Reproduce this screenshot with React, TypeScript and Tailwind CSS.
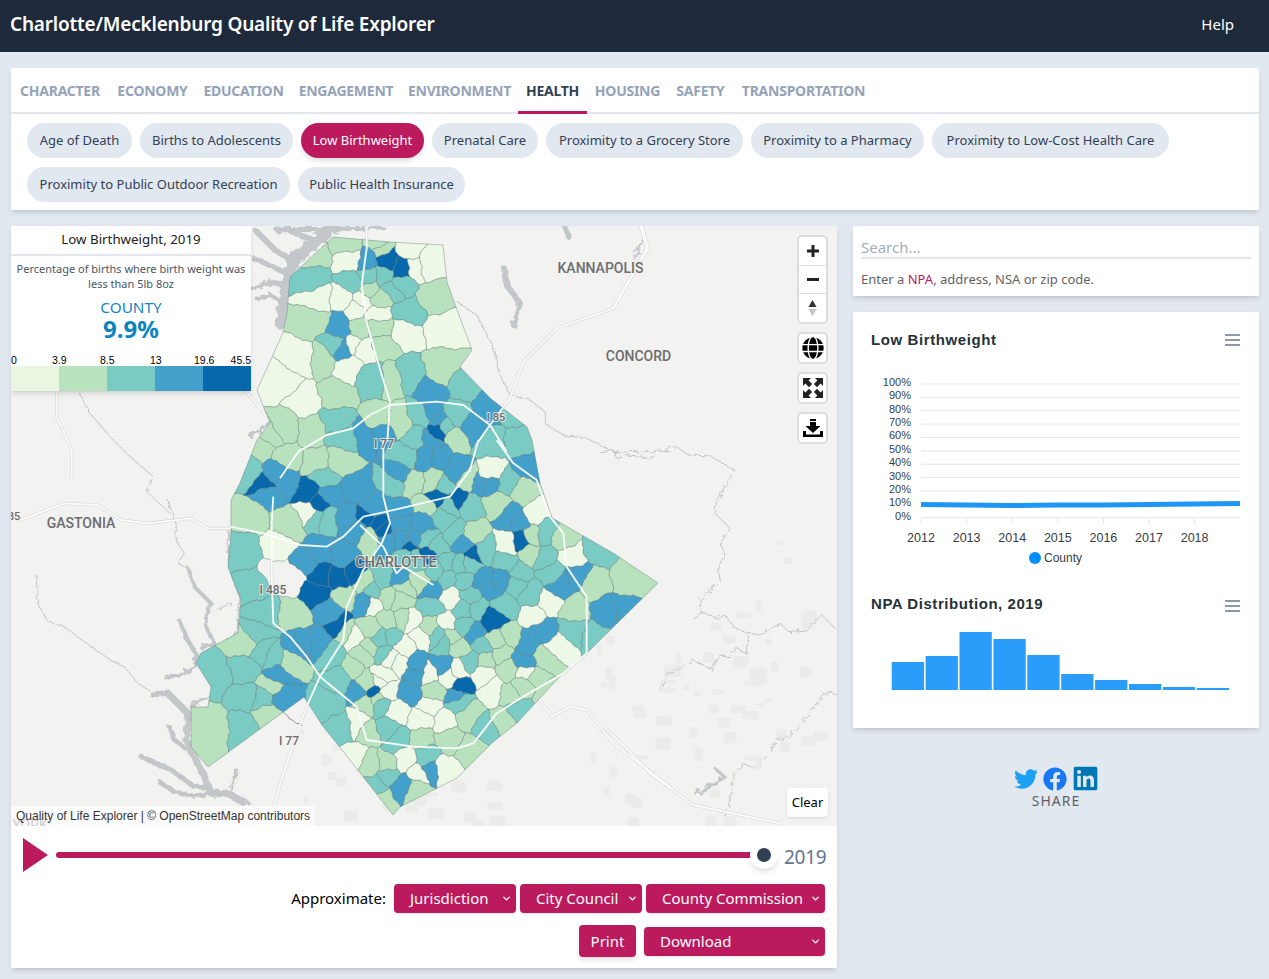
import React from 'react';
import { FaFacebook, FaGlobe, FaLinkedin, FaTwitter } from 'react-icons/fa';
import { LuChevronDown } from 'react-icons/lu';

type Pt = [number, number];

const metrics = [
  { name: 'CHARACTER', width: 'w-[98px]' },
  { name: 'ECONOMY', width: 'w-[87px]' },
  { name: 'EDUCATION', width: 'w-[95px]' },
  { name: 'ENGAGEMENT', width: 'w-[110px]' },
  { name: 'ENVIRONMENT', width: 'w-[117px]' },
  { name: 'HEALTH', width: 'w-[69px]' },
  { name: 'HOUSING', width: 'w-[81px]' },
  { name: 'SAFETY', width: 'w-[65px]' },
  { name: 'TRANSPORTATION', width: 'w-[141px]' },
];
const healthMetrics = [
  { name: 'Age of Death', width: 'w-[105px]' },
  { name: 'Births to Adolescents', width: 'w-[153px]' },
  { name: 'Low Birthweight', width: 'w-[123px]' },
  { name: 'Prenatal Care', width: 'w-[106px]' },
  { name: 'Proximity to a Grocery Store', width: 'w-[197px]' },
  { name: 'Proximity to a Pharmacy', width: 'w-[173px]' },
  { name: 'Proximity to Low-Cost Health Care', width: 'w-[237px]' },
  { name: 'Proximity to Public Outdoor Recreation', width: 'w-[263px]' },
  { name: 'Public Health Insurance', width: 'w-[167px]' },
];

const breakColors = ['#eef8e6', '#b7e2bd', '#79cbc3', '#42a0ca', '#0868ac'];
const breakLabels = ['0', '3.9', '8.5', '13', '19.6', '45.5'];

const county: Pt[] = [
  [333, 237], [367, 240], [390, 242], [443, 245], [447, 282], [460, 318], [472, 350], [460, 367], [490, 398], [527, 427],
  [532, 440], [540, 483], [552, 518], [613, 553], [658, 583], [587, 653], [563, 673], [517, 723], [493, 742], [457, 778],
  [400, 807], [393, 815], [350, 760], [322, 725], [304, 697], [208, 767], [191, 747], [191, 707], [208, 707], [211, 687],
  [196, 663], [201, 653], [238, 633], [241, 600], [228, 567], [231, 533], [231, 500], [240, 483], [257, 440], [270, 423],
  [257, 390], [283, 333], [287, 313], [290, 277],
];

// seeds for the NPA cells: x, y, break (5 = no data). north half
const northSeeds: number[][] = [
  [250, 90, 1], [350, 55, 1], [360, 105, 0], [445, 60, 1], [415, 108, 3], [470, 105, 4], [515, 135, 4], [540, 75, 0], [590, 115, 0],
  [250, 165, 2], [365, 175, 2], [415, 155, 2], [265, 215, 0], [340, 215, 0], [490, 190, 2], [610, 220, 1], [420, 190, 1], [445, 225, 1],
  [395, 235, 0], [440, 262, 0], [250, 290, 1], [535, 265, 2], [380, 250, 0], [335, 310, 3], [310, 360, 2], [340, 375, 3], [385, 310, 1],
  [445, 310, 1], [525, 320, 0], [640, 310, 0], [370, 360, 0], [400, 370, 0], [460, 360, 1], [280, 400, 1], [350, 425, 0], [430, 460, 2],
  [490, 460, 1], [530, 450, 2], [640, 430, 1], [160, 470, 0], [210, 400, 0], [220, 530, 0], [320, 510, 1], [320, 590, 2], [700, 480, 2],
  [605, 510, 3], [780, 550, 3], [850, 560, 2], [870, 650, 2], [445, 590, 1], [510, 590, 1], [410, 630, 3], [450, 620, 3], [620, 615, 4],
  [610, 560, 3], [570, 570, 2], [670, 570, 2], [730, 615, 3], [120, 640, 1], [170, 610, 1], [240, 620, 1], [340, 640, 2], [560, 640, 2],
  [680, 640, 1], [780, 650, 2],
  // keep the dark tracts narrow
  [460, 155, 2], [510, 175, 2], [450, 70, 1], [555, 125, 0], [600, 640, 3], [645, 600, 2], [625, 585, 3],
];

// south half
const southSeeds: number[][] = [
  [43, 330, 2], [73, 440, 2], [103, 520, 2], [-37, 710, 2], [43, 690, 2], [-47, 860, 1], [43, 770, 2], [38, 860, 2], [113, 820, 1],
  [83, 580, 2], [48, 610, 1], [98, 630, 2], [133, 650, 2], [178, 660, 1], [203, 620, 3], [143, 710, 3], [153, 770, 3], [128, 735, 1],
  [103, 780, 2], [193, 520, 1], [63, 230, 1], [173, 250, 1], [143, 320, 0], [100, 20, 1], [170, 50, 1], [60, 90, 2], [110, 130, 4],
  [170, 130, 3], [280, 110, 2], [330, 60, 1], [260, 70, 1], [230, 155, 4], [270, 195, 4], [240, 215, 0], [290, 230, 2], [380, 150, 3],
  [350, 230, 3], [440, 250, 4], [410, 235, 4], [460, 270, 4], [510, 250, 3], [490, 130, 2], [510, 100, 3], [530, 50, 2], [585, 50, 3],
  [630, 50, 3], [680, 90, 3], [550, 130, 1], [620, 170, 4], [680, 180, 4], [580, 250, 3], [640, 230, 2], [720, 120, 1], [745, 130, 3],
  [785, 100, 0], [780, 130, 3], [830, 130, 2], [880, 150, 1], [900, 85, 3], [800, 190, 1], [720, 200, 2], [840, 230, 3], [920, 220, 0],
  [870, 300, 4], [835, 310, 0], [900, 350, 1], [1000, 290, 1], [950, 270, 2], [1030, 350, 0], [1100, 330, 2], [1045, 405, 3], [990, 435, 3],
  [1090, 430, 1], [1200, 420, 1], [1130, 520, 3], [1180, 510, 3], [1100, 590, 2], [1030, 510, 1], [1025, 570, 2], [960, 490, 0], [915, 530, 0],
  [940, 570, 3], [985, 620, 0], [890, 610, 3], [880, 670, 3], [885, 695, 0], [840, 590, 1], [790, 540, 4], [820, 490, 2], [780, 450, 3],
  [815, 415, 3], [760, 420, 3], [730, 345, 4], [700, 310, 3], [620, 320, 2], [680, 280, 2], [730, 280, 1], [550, 300, 3], [590, 340, 4],
  [540, 320, 4], [190, 420, 5], [140, 400, 5], [230, 370, 3], [270, 400, 4], [250, 460, 4], [330, 410, 4], [370, 400, 4], [270, 340, 3],
  [340, 350, 3], [300, 520, 3], [325, 555, 4], [220, 610, 3], [265, 610, 3], [310, 640, 2], [350, 580, 1], [365, 590, 0], [430, 500, 0],
  [400, 490, 3], [420, 560, 1], [490, 590, 2], [510, 480, 1], [540, 545, 0], [575, 590, 0], [520, 620, 0], [610, 500, 2], [650, 545, 0],
  [660, 470, 0], [460, 420, 2], [510, 420, 3], [570, 420, 1], [610, 450, 3], [640, 610, 2], [690, 620, 1], [730, 580, 3], [630, 680, 3],
  [720, 665, 2], [685, 695, 0], [660, 710, 0], [760, 705, 0], [690, 740, 4], [680, 765, 3], [790, 745, 0], [810, 640, 1], [800, 600, 1],
  [920, 710, 1], [840, 760, 1], [870, 810, 2], [710, 820, 1], [775, 870, 2], [730, 930, 1], [820, 850, 1], [480, 660, 0], [510, 670, 0],
  [460, 700, 0], [560, 675, 3], [600, 700, 0], [610, 760, 1], [540, 760, 3], [555, 700, 3], [500, 810, 0], [430, 755, 4], [385, 755, 3],
  [330, 720, 2], [370, 680, 1], [400, 650, 1], [470, 750, 0], [450, 790, 2], [300, 790, 2], [340, 860, 2], [380, 850, 0], [600, 790, 0],
  [580, 845, 0], [640, 850, 0], [690, 790, 2], [580, 890, 1], [650, 895, 1], [470, 870, 2], [420, 880, 1], [380, 950, 0], [470, 970, 1],
  [525, 960, 0], [590, 950, 2], [640, 990, 0], [500, 900, 2], [510, 1035, 3], [450, 1080, 1], [435, 1040, 2], [560, 1050, 1], [570, 1000, 0],
  [600, 990, 3], [480, 1010, 2], [420, 970, 1],
  // more tracts through the middle, mostly the two mid breaks
  [425, 620, 1], [455, 640, 2], [520, 540, 1], [470, 540, 1], [450, 600, 2], [600, 560, 1], [620, 590, 2], [665, 590, 1], [700, 560, 2],
  [700, 510, 2], [740, 500, 2], [760, 620, 2], [770, 660, 1], [830, 690, 1], [880, 740, 1], [950, 660, 1], [950, 760, 1], [650, 420, 2],
  [700, 420, 2], [720, 470, 2], [690, 370, 2], [650, 370, 2], [620, 390, 2], [860, 440, 2], [900, 460, 2], [870, 390, 2], [830, 370, 2],
  [940, 360, 2], [960, 400, 2], [560, 370, 2], [520, 440, 1], [470, 470, 1], [430, 450, 2], [400, 430, 1], [350, 470, 1],
  // keep the dark tracts narrow
  [430, 200, 3], [500, 210, 3], [470, 300, 3], [420, 290, 1], [380, 270, 3], [610, 130, 1], [590, 195, 1], [660, 200, 2], [640, 140, 2],
  [900, 280, 1], [870, 250, 3], [760, 330, 2], [720, 370, 2], [590, 300, 2], [515, 300, 3], [560, 350, 2], [530, 350, 2], [130, 100, 3],
  [120, 160, 3], [300, 170, 3], [260, 225, 2], [445, 730, 0], [445, 780, 1], [412, 730, 1], [412, 785, 1],
];

const seeds = [
  ...northSeeds.map(([x, y, c]) => [230 + x / 3, 225 + y / 3, c]),
  ...southSeeds.map(([x, y, c]) => [230 + x / 3, 440 + y / 3, c]),
];

const clipHalfPlane = (poly: Pt[], a: Pt, b: Pt): Pt[] => {
  const mx = (a[0] + b[0]) / 2;
  const my = (a[1] + b[1]) / 2;
  const nx = b[0] - a[0];
  const ny = b[1] - a[1];
  const side = (p: Pt) => (p[0] - mx) * nx + (p[1] - my) * ny;
  const out: Pt[] = [];
  poly.forEach((p, i) => {
    const q = poly[(i + 1) % poly.length];
    const sp = side(p);
    const sq = side(q);
    if (sp <= 0) out.push(p);
    if (sp < 0 !== sq < 0 && sp !== sq) {
      const t = sp / (sp - sq);
      out.push([p[0] + (q[0] - p[0]) * t, p[1] + (q[1] - p[1]) * t]);
    }
  });
  return out;
};

const distToCounty = (p: Pt) => {
  let best = Infinity;
  county.forEach((a, i) => {
    const b = county[(i + 1) % county.length];
    const dx = b[0] - a[0];
    const dy = b[1] - a[1];
    const t = Math.max(0, Math.min(1, ((p[0] - a[0]) * dx + (p[1] - a[1]) * dy) / (dx * dx + dy * dy)));
    best = Math.min(best, Math.hypot(p[0] - a[0] - dx * t, p[1] - a[1] - dy * t));
  });
  return best;
};

// bend the straight cell edges so they read like tract boundaries
const warp = (p: Pt): Pt => {
  const k = Math.min(1, distToCounty(p) / 8);
  const [x, y] = p;
  return [
    x + k * (1.3 * Math.sin(y * 0.23 + x * 0.07) + 0.7 * Math.sin(y * 0.71 - x * 0.31)),
    y + k * (1.3 * Math.sin(x * 0.21 - y * 0.09) + 0.7 * Math.sin(x * 0.67 + y * 0.37)),
  ];
};

const cellPath = (poly: Pt[]) => {
  const pts: Pt[] = [];
  poly.forEach((p, i) => {
    const q = poly[(i + 1) % poly.length];
    const steps = Math.max(1, Math.round(Math.hypot(q[0] - p[0], q[1] - p[1]) / 3));
    for (let s = 0; s < steps; s++) {
      pts.push(warp([p[0] + ((q[0] - p[0]) * s) / steps, p[1] + ((q[1] - p[1]) * s) / steps]));
    }
  });
  return 'M' + pts.map((p) => `${p[0].toFixed(1)} ${p[1].toFixed(1)}`).join('L') + 'Z';
};

const cells = seeds
  .map((s, i) => {
    let poly = county;
    seeds.forEach((o, j) => {
      if (j !== i && poly.length > 2) poly = clipHalfPlane(poly, [s[0], s[1]], [o[0], o[1]]);
    });
    return { c: s[2], d: poly.length > 2 ? cellPath(poly) : '' };
  })
  .filter((cell) => cell.d && cell.c < 5);

const toPoints = (pts: number[][], ox: number, oy: number) => pts.map(([x, y]) => `${ox + x / 3},${oy + y / 3}`).join(' ');

const roads = [
  // I-77
  toPoints([[410, 0], [410, 70], [395, 180], [410, 290], [440, 400], [480, 530], [472, 650]], 230, 225),
  toPoints([[460, 0], [460, 170], [480, 250], [455, 310], [400, 390], [350, 500], [340, 600], [270, 710], [230, 800], [160, 1000], [120, 1140]], 230, 440),
  // I-485
  toPoints([[130, 170], [125, 250], [125, 400], [130, 550], [180, 590], [230, 650], [270, 710], [380, 800], [410, 900], [550, 920], [680, 925], [730, 910], [800, 820], [880, 770], [1000, 700], [1070, 640], [1070, 470], [1010, 380], [1000, 280], [960, 230], [920, 120], [850, 70], [800, 0]], 230, 440),
  toPoints([[830, 680], [780, 600], [700, 540], [620, 530], [480, 540], [420, 570], [370, 610], [290, 630], [205, 680], [150, 760]], 230, 225),
  // I-85
  toPoints([[0, 260], [100, 280], [210, 315], [290, 320], [340, 290], [400, 230], [470, 215], [660, 170], [720, 90], [745, 0]], 230, 440),
  toPoints([[745, 650], [780, 600], [840, 520], [880, 410], [980, 310], [1150, 250], [1250, 70], [1230, 0]], 230, 225),
  toPoints([[-60, 0], [30, 60], [160, 10], [260, 15], [330, 60], [410, 70], [540, 55], [590, 85], [660, 85]], 11, 500),
  // uptown and the rest
  toPoints([[390, 255], [460, 320], [500, 400], [520, 380], [610, 435]], 230, 440),
  toPoints([[930, 780], [965, 830], [1020, 800], [1070, 810], [1150, 910], [1320, 1040]], 230, 440),
  toPoints([[0, 850], [60, 905], [150, 1000], [280, 1095], [540, 1150]], 600, 440),
  toPoints([[170, 510], [170, 590], [215, 690], [215, 775]], 0, 220),
  toPoints([[735, 510], [800, 590]], 0, 220),
  toPoints([[1235, 0], [1255, 70], [1150, 250]], 230, 225),
];

const boundaries = [
  toPoints([[680, 230], [740, 270], [790, 370], [810, 450], [840, 510], [900, 525], [945, 560], [950, 600], [1000, 630], [1070, 640], [1150, 680], [1320, 680]], 230, 225),
  toPoints([[0, 35], [40, 30], [50, 55], [90, 45], [145, 55], [180, 30], [230, 20], [265, 45], [330, 48], [405, 90], [350, 180], [345, 220], [390, 265], [360, 310], [375, 345], [355, 380], [360, 420], [300, 480], [303, 515], [280, 540]], 600, 440),
  toPoints([[303, 515], [350, 535], [375, 525], [405, 565], [440, 578], [480, 585], [540, 550], [565, 575], [620, 570], [665, 525], [710, 570]], 600, 440),
  toPoints([[440, 578], [440, 640], [410, 625], [390, 650], [360, 645], [335, 690], [280, 660], [245, 680], [205, 700], [185, 750]], 600, 440),
  toPoints([[710, 765], [680, 755], [650, 795], [610, 840], [570, 890], [530, 900], [510, 940], [460, 985], [430, 970], [400, 1005], [395, 1060], [375, 1130]], 600, 440),
  toPoints([[75, 225], [80, 310], [110, 365], [160, 380], [220, 425], [290, 475], [340, 500], [380, 550], [420, 575]], 11, 500),
  toPoints([[235, 515], [270, 580], [330, 650], [390, 710], [460, 770], [440, 815], [510, 880]], 0, 220),
  toPoints([[470, 0], [495, 70], [495, 120], [520, 160], [500, 190], [525, 205]], 11, 500),
  toPoints([[610, 335], [660, 308]], 11, 500),
];

// lakes as dendritic channels: points and a stroke width
const lakes: { p: string; w: number }[] = [
  // Lake Norman
  { p: toPoints([[1000, 20], [940, 70], [880, 120], [860, 200], [845, 310]], 0, 220), w: 13 },
  { p: toPoints([[880, 120], [830, 95], [770, 35]], 0, 220), w: 6 },
  { p: toPoints([[870, 165], [820, 140], [760, 115]], 0, 220), w: 5 },
  { p: toPoints([[860, 200], [810, 185], [760, 205]], 0, 220), w: 5 },
  { p: toPoints([[855, 250], [810, 225], [770, 235]], 0, 220), w: 4 },
  { p: toPoints([[940, 60], [900, 45], [860, 25]], 0, 220), w: 6 },
  { p: toPoints([[1000, 30], [920, 28], [830, 30]], 0, 220), w: 5 },
  { p: toPoints([[1000, 25], [1060, 28], [1150, 22]], 0, 220), w: 4 },
  { p: toPoints([[840, 585], [800, 610], [770, 640], [750, 645]], 0, 220), w: 4 },
  // Lake Wylie
  { p: toPoints([[530, 205], [550, 260], [600, 310], [580, 370], [610, 430], [570, 440]], 11, 500), w: 4 },
  { p: toPoints([[505, 360], [530, 420], [560, 470], [550, 500], [510, 525], [465, 532]], 11, 500), w: 4.5 },
  { p: toPoints([[570, 442], [640, 432], [680, 400]], 11, 500), w: 3 },
  { p: toPoints([[430, 585], [470, 580], [530, 640], [525, 720], [580, 830], [600, 880], [650, 880], [705, 910]], 11, 500), w: 7 },
  { p: toPoints([[475, 680], [490, 720], [525, 745]], 11, 500), w: 4.5 },
  { p: toPoints([[390, 770], [480, 810], [550, 860], [590, 860]], 11, 500), w: 5 },
  { p: toPoints([[445, 845], [490, 875], [545, 890], [590, 880]], 11, 500), w: 5 },
  { p: toPoints([[680, 810], [660, 870]], 11, 500), w: 3 },
  { p: toPoints([[655, 90], [650, 180], [685, 290], [680, 390]], 11, 500), w: 2 },
  { p: toPoints([[540, 640], [550, 605], [600, 590]], 11, 500), w: 3 },
  // small ones
  { p: toPoints([[822, 130], [830, 180], [870, 235], [850, 300]], 230, 225), w: 6 },
  { p: toPoints([[1005, 8], [1018, 38]], 230, 225), w: 5 },
  { p: toPoints([[1235, 45], [1215, 100]], 230, 225), w: 3 },
  { p: toPoints([[290, 1062], [335, 1035], [375, 1012], [345, 985]], 600, 440), w: 3 },
];

const blotches = Array.from({ length: 90 }, (_, i) => {
  const a = Math.abs(Math.sin(i * 12.9898) * 43758.5453) % 1;
  const b = Math.abs(Math.sin(i * 78.233) * 12543.123) % 1;
  const south = i % 3 === 0;
  return {
    x: south ? 300 + a * 190 : 590 + a * 230,
    y: south ? 730 + b * 90 : 600 + b * 220 - (a > 0.7 ? 60 : 0),
    w: 5 + ((a * 37) % 13),
    h: 4 + ((b * 29) % 10),
  };
});

const mapLabels: { x: number; y: number; t: string; size?: number }[] = [
  { x: 600.5, y: 273, t: 'KANNAPOLIS' },
  { x: 638.5, y: 361, t: 'CONCORD' },
  { x: 81, y: 528, t: 'GASTONIA' },
  { x: 396, y: 567, t: 'CHARLOTTE', size: 14.5 },
  { x: 496, y: 421, t: 'I 85', size: 11 },
  { x: 384, y: 448, t: 'I 77', size: 12 },
  { x: 273, y: 594, t: 'I 485', size: 12 },
  { x: 289, y: 745, t: 'I 77', size: 12 },
  { x: 14, y: 520, t: '85', size: 11 },
  { x: 30, y: 830, t: 'YORK', size: 14 },
];

const CountyMap = () => (
  <svg viewBox="11 226 826 600" className="block w-full h-full">
    <defs>
      <filter id="shoreline" x="-5%" y="-5%" width="110%" height="110%">
        <feTurbulence type="fractalNoise" baseFrequency="0.16" numOctaves="2" seed="4" />
        <feDisplacementMap in="SourceGraphic" scale="7" />
      </filter>
      <filter id="creek" x="-5%" y="-5%" width="110%" height="110%">
        <feTurbulence type="fractalNoise" baseFrequency="0.2" numOctaves="2" seed="9" />
        <feDisplacementMap in="SourceGraphic" scale="6" />
      </filter>
    </defs>
    <rect x="11" y="226" width="826" height="600" fill="#f2f2f1" />
    {blotches.map((b, i) => (
      <rect key={i} x={b.x} y={b.y} width={b.w} height={b.h} rx="2" fill="#ebebea" />
    ))}
    <g filter="url(#creek)">
      {boundaries.map((p, i) => (
        <polyline key={i} points={p} fill="none" stroke="#bfc3c4" strokeWidth="1" />
      ))}
    </g>
    <g filter="url(#shoreline)">
      {lakes.map((l, i) => (
        <polyline key={i} points={l.p} fill="none" stroke="#c3c7ca" strokeWidth={l.w} strokeLinejoin="round" strokeLinecap="round" />
      ))}
    </g>
    {roads.map((p, i) => (
      <polyline key={i} points={p} fill="none" stroke="#d4d4d4" strokeWidth="3" strokeLinejoin="round" />
    ))}
    {cells.map((cell, i) => (
      <path key={i} d={cell.d} fill={breakColors[cell.c]} stroke="#5f7472" strokeWidth="0.55" strokeOpacity="0.75" />
    ))}
    {roads.map((p, i) => (
      <polyline key={i} points={p} fill="none" stroke="#ffffff" strokeOpacity="0.92" strokeWidth="1.9" strokeLinejoin="round" />
    ))}
    {mapLabels.map((l) => (
      <text
        key={l.t + l.x}
        x={l.x}
        y={l.y}
        textAnchor="middle"
        fontSize={l.size || 14}
        fontWeight="500"
        fill="#6d6d6d"
        stroke="#f2f2f1"
        strokeWidth="2"
        strokeOpacity="0.8"
        paintOrder="stroke"
        fontFamily="Roboto, sans-serif"
      >
        {l.t}
      </text>
    ))}
  </svg>
);

const MapButton = ({ children, className = '' }: { children: React.ReactNode; className?: string }) => (
  <div className={`w-[31px] flex items-center justify-center bg-white border-2 border-[#dcdcdc] rounded-[5px] text-black ${className}`}>
    {children}
  </div>
);

const FullscreenIcon = () => (
  <svg viewBox="0 0 20 20" className="w-[20px] h-[20px]" fill="#222">
    {[0, 90, 180, 270].map((angle) => (
      <path key={angle} transform={`rotate(${angle} 10 10)`} d="M0 0h8L5.600 2.400 9.200 6 6 9.200 2.400 5.600 0 8z" />
    ))}
  </svg>
);

const DownloadIcon = () => (
  <svg viewBox="0 0 20 18" className="w-[20px] h-[18px]" fill="#000">
    <path d="M7 0h6v2H7zM7 3h6v4h4.500L10 14 2.500 7H7z" />
    <path d="M0 12h3v3.500h14V12h3v6H0z" />
  </svg>
);

const Select = ({ label, className }: { label: string; className: string }) => (
  <button className={`h-[29px] flex items-center justify-between whitespace-nowrap rounded-[4px] bg-[#bb1a5c] pl-4 pr-[4px] text-white text-[15px] shadow-sm ${className}`}>
    <span>{label}</span>
    <LuChevronDown className="w-[11px] h-[11px]" strokeWidth={3} />
  </button>
);

const HamburgerLines = ({ x, y }: { x: number; y: number }) => (
  <g stroke="#6e8192" strokeWidth="1.6">
    <line x1={x} x2={x + 15} y1={y} y2={y} />
    <line x1={x} x2={x + 15} y1={y + 5} y2={y + 5} />
    <line x1={x} x2={x + 15} y1={y + 10} y2={y + 10} />
  </g>
);

const percentTicks = [100, 90, 80, 70, 60, 50, 40, 30, 20, 10, 0];
const years = [2012, 2013, 2014, 2015, 2016, 2017, 2018];

const TrendChart = () => (
  <svg viewBox="853 312 406 264" className="block w-full h-[264px]" fontFamily='"Liberation Sans", Arial, sans-serif'>
    <text x="871" y="345" fontSize="15" fontWeight="700" fill="#263238" letterSpacing="0.6">
      Low Birthweight
    </text>
    <HamburgerLines x={1225} y={335} />
    {percentTicks.map((t, i) => (
      <g key={t}>
        <line x1="921" x2="1240" y1={384 + i * 13.37} y2={384 + i * 13.37} stroke="#e6e6e6" />
        <text x="911" y={386 + i * 13.37} textAnchor="end" fontSize="11" fill="#373d3f">
          {t}%
        </text>
      </g>
    ))}
    {years.map((y, i) => (
      <g key={y}>
        <line x1={921 + i * 45.6} x2={921 + i * 45.6} y1="518" y2="524" stroke="#e6e6e6" />
        <text x={921 + i * 45.6} y="542" textAnchor="middle" fontSize="12.500" fill="#373d3f">
          {y}
        </text>
      </g>
    ))}
    <polyline points="921,504.500 966,505 1012,505.500 1058,505 1103,505 1149,504.500 1194,504 1240,503.500" fill="none" stroke="#1e96f3" strokeWidth="5" />
    <circle cx="1035" cy="558" r="6" fill="#008ffb" />
    <text x="1044" y="562" fontSize="12" fill="#373d3f">
      County
    </text>
  </svg>
);

const histogramTops = [662, 656, 632, 639, 655, 674, 680, 684, 687, 688];

const DistributionChart = () => (
  <svg viewBox="853 576 406 152" className="block w-full h-[152px]" fontFamily='"Liberation Sans", Arial, sans-serif'>
    <text x="871" y="609" fontSize="15" fontWeight="700" fill="#263238" letterSpacing="0.55">
      NPA Distribution, 2019
    </text>
    <HamburgerLines x={1225} y={601} />
    {histogramTops.map((top, i) => (
      <rect key={i} x={891.700 + i * 33.900} y={top} width="32.300" height={690 - top} fill="#2a9dfa" />
    ))}
  </svg>
);

export default function App() {
  return (
    <div className="min-h-screen bg-[#e2e8f0] font-['Noto_Sans',sans-serif] text-[#334155]">
      <header className="h-[52px] bg-[#1e293b] flex items-center justify-between pl-[10px] pr-[35px] pb-1 text-white">
        <h1 className="text-[19px] font-semibold tracking-[-0.2px]">Charlotte/Mecklenburg Quality of Life Explorer</h1>
        <a className="text-[15px]">Help</a>
      </header>

      <main className="pl-[11px] pr-[10px] pt-4 pb-[11px]">
        <section className="bg-white shadow-md h-[142px]">
          <nav className="flex h-[46px] border-b-2 border-[#e2e8f0]">
            {metrics.map((m) => (
              <a
                key={m.name}
                className={`h-[46px] text-center pt-[13px] text-sm font-bold tracking-[-0.25px] ${m.width} ${
                  m.name === 'HEALTH' ? 'text-[#334155] border-b-[3px] border-[#bb1a5c]' : 'text-[#94a3b8]'
                }`}
              >
                {m.name}
              </a>
            ))}
          </nav>
          <div className="flex flex-wrap gap-x-2 gap-y-[9px] pl-4 pt-[9px]">
            {healthMetrics.map((m) => (
              <span
                key={m.name}
                className={`h-[35px] flex items-center justify-center rounded-full text-[13px] ${m.width} ${
                  m.name === 'Low Birthweight' ? 'bg-[#bb1a5c] text-white shadow-md' : 'bg-[#e2e8f0] text-[#334155]'
                }`}
              >
                {m.name}
              </span>
            ))}
          </div>
        </section>

        <div className="flex gap-4 mt-4">
          <section className="w-[826px] shrink-0 bg-white shadow-md">
            <div className="relative h-[600px] overflow-hidden">
              <CountyMap />

              <div className="absolute left-0 top-0 w-[240px] bg-white shadow-md">
                <div className="h-[30px] border-b-2 border-[#e2e8f0] flex items-center justify-center text-[13.3px] text-[#222]">
                  Low Birthweight, 2019
                </div>
                <p className="px-[2px] pt-[5px] text-center text-[11px] leading-[15px] text-[#4b5563]">
                  Percentage of births where birth weight was less than 5lb 8oz
                </p>
                <div className="mt-[6px] text-center text-[15.3px] leading-[20px] text-[#1486c4]">COUNTY</div>
                <div className="text-center text-2xl leading-[24px] font-bold text-[#0a85c2]">9.9%</div>
                <div className="relative h-[12px] mt-[13px] font-['Liberation_Sans',sans-serif] text-[10.5px] leading-[12px] text-black">
                  <span className="absolute left-0">{breakLabels[0]}</span>
                  <span className="absolute left-[41px]">{breakLabels[1]}</span>
                  <span className="absolute left-[89px]">{breakLabels[2]}</span>
                  <span className="absolute left-[139px]">{breakLabels[3]}</span>
                  <span className="absolute left-[183px]">{breakLabels[4]}</span>
                  <span className="absolute right-0">{breakLabels[5]}</span>
                </div>
                <div className="flex h-[25px]">
                  <div className="flex-1 bg-[#e9f6e1]" />
                  <div className="flex-1 bg-[#b7e2bd]" />
                  <div className="flex-1 bg-[#79cbc3]" />
                  <div className="flex-1 bg-[#42a0ca]" />
                  <div className="flex-1 bg-[#0868ac]" />
                </div>
              </div>

              <div className="absolute left-[786px] top-[9px] flex flex-col gap-2">
                <div className="w-[31px] h-[89px] flex flex-col bg-white border-2 border-[#dcdcdc] rounded-[5px]">
                  <div className="flex-1 flex items-center justify-center border-b border-[#dcdcdc]">
                    <svg viewBox="0 0 12 12" className="w-[12px] h-[12px]"><path d="M4.500 0h3v4.500H12v3H7.500V12h-3V7.500H0v-3h4.500z" fill="#222" /></svg>
                  </div>
                  <div className="flex-1 flex items-center justify-center border-b border-[#dcdcdc]">
                    <div className="w-[12px] h-[3px] bg-[#222]" />
                  </div>
                  <div className="flex-1 flex items-center justify-center">
                    <svg viewBox="0 0 10 18" className="w-[9px] h-[18px]">
                      <path d="M5 0l4.500 8H.5z" fill="#333" />
                      <path d="M5 18L.5 10h9z" fill="#c4c4c4" />
                    </svg>
                  </div>
                </div>
                <MapButton className="h-[32px]"><FaGlobe className="w-[22px] h-[22px]" /></MapButton>
                <MapButton className="h-[32px]"><FullscreenIcon /></MapButton>
                <MapButton className="h-[32px]"><DownloadIcon /></MapButton>
              </div>

              <button className="absolute left-[776px] top-[562px] w-[41px] h-[29px] rounded-[4px] bg-white text-[13px] text-black shadow">Clear</button>

              <div className="absolute left-0 bottom-0 h-[20px] pl-[5px] pr-[5px] bg-white/70 font-['Liberation_Sans',sans-serif] text-xs leading-[20px] text-[#333]">
                Quality of Life Explorer | © OpenStreetMap contributors
              </div>
            </div>

            <div className="h-[142px] pl-3 pr-3 pt-3">
              <div className="flex items-center h-[34px]">
                <svg viewBox="0 0 25 34" className="w-[25px] h-[34px] shrink-0"><path d="M0 0l25 17L0 34z" fill="#bb1a5c" /></svg>
                <div className="relative ml-2 w-[708px] h-[6px] shrink-0 rounded-full bg-[#bb1a5c]">
                  <div className="absolute right-[-14px] top-[-11px] w-[28px] h-[28px] rounded-full bg-white shadow-md flex items-center justify-center">
                    <div className="w-[14px] h-[14px] rounded-full bg-[#334155]" />
                  </div>
                </div>
                <span className="ml-5 text-[19px] leading-none mt-[4px] tracking-[-0.3px] text-[#64748b]">2019</span>
              </div>
              <div className="flex items-center justify-end gap-1 mt-3">
                <span className="mr-1 text-[15px] text-black">Approximate:</span>
                <Select label="Jurisdiction" className="w-[122px]" />
                <Select label="City Council" className="w-[122px]" />
                <Select label="County Commission" className="w-[179px]" />
              </div>
              <div className="flex items-center justify-end gap-2 mt-3">
                <button className="w-[57px] h-[32px] rounded-[4px] bg-[#bb1a5c] text-[15px] text-white shadow-md">Print</button>
                <Select label="Download" className="w-[181px]" />
              </div>
            </div>
          </section>

          <aside className="flex-1 flex flex-col gap-4">
            <section className="bg-white shadow-md h-[70px] px-2 pt-2">
              <input placeholder="Search..." className="block w-full h-[25px] pt-[3px] border-b-2 border-[#e2e8f0] text-[15px] outline-none placeholder:text-[#a0aec0]" />
              <p className="mt-[11px] text-[13px] leading-[18px] text-[#5f6368]">
                Enter a <span className="text-[#bb1a5c]">NPA</span>, address, NSA or zip code.
              </p>
            </section>

            <section className="bg-white shadow-md h-[416px]">
              <TrendChart />
              <DistributionChart />
            </section>

            <div className="flex flex-col items-center mt-[21px]">
              <div className="flex items-center gap-[5px]">
                <FaTwitter className="w-[24px] h-[24px] text-[#1da1f2]" />
                <FaFacebook className="w-[24px] h-[24px] text-[#1877f2]" />
                <FaLinkedin className="w-[27px] h-[27px] text-[#0077b5]" />
              </div>
              <div className="text-sm leading-[18px] tracking-[1px] text-[#5f6368]">SHARE</div>
            </div>
          </aside>
        </div>
      </main>
    </div>
  );
}
